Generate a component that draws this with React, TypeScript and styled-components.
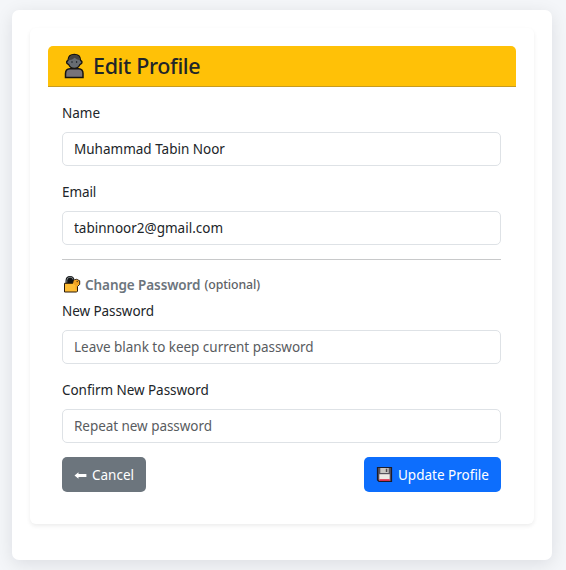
import React from "react";
import styled, { createGlobalStyle } from "styled-components";

const GlobalStyle = createGlobalStyle`
  *, *::before, *::after { box-sizing: border-box; }
  body {
    margin: 0;
    background: #f4f6f9;
    color: #212529;
    font-family: "Noto Sans", "Open Sans", sans-serif;
    font-size: 13.5px;
    line-height: 22px;
    overflow: hidden;
  }
`;

const Page = styled.main`
  height: 570px;
  padding: 10px 14px 10px 12px;
`;

const Panel = styled.section`
  height: 550px;
  padding: 18px;
  border-radius: 7px;
  background: #fff;
  box-shadow: 0 4px 18px rgba(0, 0, 30, 0.1);
`;

const Card = styled.div`
  height: 496px;
  padding: 18px;
  border-radius: 6px;
  background: #fff;
  box-shadow: 0 2px 4px rgba(0, 0, 0, 0.075);
`;

const Header = styled.header`
  display: flex;
  align-items: center;
  height: 41px;
  padding: 0 15px;
  border-bottom: 1px solid #c79b20;
  border-radius: 5px 5px 0 0;
  background: #ffc107;
`;

const Title = styled.h1`
  margin: 0 0 0 7px;
  font-size: 21.5px;
  line-height: 26px;
  font-weight: 500;
`;

const Form = styled.form`
  padding: 15px 15px 0 14px;
`;

const Field = styled.div<{ $gap: number }>`
  display: flex;
  flex-direction: column;
  gap: 8px;
  margin-bottom: ${(p) => p.$gap}px;
`;

const Spaced = styled.span<{ $track: number }>`
  letter-spacing: ${(p) => p.$track}px;
  white-space: nowrap;
`;

const Label = styled.label<{ $track: number }>`
  height: 22px;
  letter-spacing: ${(p) => p.$track}px;
`;

const Input = styled.input<{ $track: number }>`
  width: 100%;
  height: 34px;
  padding: 0 11px;
  border: 1px solid #dee2e6;
  border-radius: 5px;
  background: #fff;
  color: #212529;
  font: inherit;
  letter-spacing: ${(p) => p.$track}px;
  outline: none;
  &::placeholder { color: #595c5f; opacity: 1; }
`;

const Divider = styled.hr`
  height: 1px;
  margin: 0 0 14px;
  border: 0;
  background: #c8c9ca;
`;

const SectionTitle = styled.h2`
  display: flex;
  align-items: center;
  height: 22px;
  margin: 0 0 4px;
  color: #6c757d;
  font-size: 13.5px;
  font-weight: 600;
  svg { margin: 0 4px 2px 1px; }
`;

const Optional = styled.small`
  margin-left: 4px;
  color: #5e6266;
  font-size: 12.3px;
  font-weight: 500;
`;

const Actions = styled.div`
  display: flex;
  justify-content: space-between;
`;

const Button = styled.button<{ $color: string; $width: number }>`
  display: flex;
  align-items: center;
  gap: 5px;
  width: ${(p) => p.$width}px;
  height: 35px;
  padding: 0 0 0 12px;
  border: 0;
  border-radius: 5px;
  background: ${(p) => p.$color};
  color: #fff;
  font: inherit;
`;

const PersonIcon = () => (
  <svg width="23" height="26" viewBox="0 0 23 26">
    <path d="M2.500 24.500v-4Q2.500 16 7 15.800h8.500q4.500.2 4.500 4.700V24.500Z" fill="#777379" stroke="#171410" strokeWidth="1.500" />
    <path d="M11.300 1.500C7.300 1.500 5.200 3.900 5 7.300Q3 8.300 3.900 10.300L5.800 11.700Q7.500 15.300 11.300 15.300t5.500-3.600l1.900-1.400Q19.600 8.300 17.600 7.300C17.400 3.900 15.300 1.500 11.300 1.500Z" fill="#686d72" stroke="#171410" strokeWidth="1.300" />
    <path d="M5.500 7.300Q5.800 2.100 11.300 2.100t5.800 5.200Q13 6.600 11.700 4.700 9.500 7 5.500 7.300Z" fill="#45423f" />
    <ellipse cx="9" cy="9" rx=".7" ry="1.100" fill="#252a31" />
    <ellipse cx="13.600" cy="9" rx=".7" ry="1.100" fill="#252a31" />
  </svg>
);

const LockIcon = () => (
  <svg width="18" height="18" viewBox="0 0 18 18">
    <path d="M2.500 9V6Q2.500 1 7 1T11.500 6v3Z" fill="#111315" />
    <path d="M3.800 7.800V5.500Q4 2.200 7 2.200T10 4.500" fill="none" stroke="#858c90" strokeWidth=".9" />
    <path d="M1.500 8.300h8.300l.7-3L13.500 4.300l3.200 1.500v3.600l-2.200 2v4.800l-.8.800H1.500Z" fill="#ffbd35" stroke="#2b1b0b" strokeWidth="1" strokeLinejoin="round" />
    <path d="M10.700 9.300v-3l1.200-1.200 2.400-.1 1.700 1.200v2.700l-2.200 1.700v4.200h-1.200v-4.200Z" fill="#f3a423" />
    <circle cx="14.200" cy="6.500" r=".7" fill="#513009" />
  </svg>
);

const ArrowIcon = () => (
  <svg width="13" height="10" viewBox="0 0 13 10">
    <path d="M.5 5.500 4.500 2.200V4H12.400V7H4.500V8.800Z" fill="#fff" />
  </svg>
);

const DiskIcon = () => (
  <svg width="17" height="17" viewBox="0 0 17 17">
    <path d="M1.500 1.500h14v14H3L1.500 14Z" fill="#57525c" stroke="#1c1b29" strokeWidth="1.200" />
    <path d="M4.300 2h8.400v5H4.300Z" fill="#c9c7c3" />
    <path d="M9.800 2.700h1.500v3.300H9.800Z" fill="#514b50" />
    <path d="M3.300 8.200h10.400v6.300H3.300Z" fill="#eeeae6" />
    <path d="M3.300 13.200h10.400v1.700H3.300Z" fill="#dc2847" />
  </svg>
);

export default function App() {
  return (
    <>
      <GlobalStyle />
      <Page>
        <Panel>
          <Card>
            <Header>
              <PersonIcon />
              <Title><Spaced $track={-0.35}>Edit Profile</Spaced></Title>
            </Header>
            <Form onSubmit={(e) => e.preventDefault()}>
              <Field $gap={15}>
                <Label htmlFor="name" $track={0}>Name</Label>
                <Input id="name" $track={0} defaultValue="Muhammad Tabin Noor" />
              </Field>
              <Field $gap={14}>
                <Label htmlFor="email" $track={-0.1}>Email</Label>
                <Input id="email" $track={0} defaultValue="tabinnoor2@gmail.com" />
              </Field>
              <Divider />
              <SectionTitle>
                <LockIcon />
                <Spaced $track={-0.08}>Change Password</Spaced>
                <Optional><Spaced $track={-0.1}>(optional)</Spaced></Optional>
              </SectionTitle>
              <Field $gap={15}>
                <Label htmlFor="password" $track={-0.07}>New Password</Label>
                <Input id="password" type="password" $track={-0.03} placeholder="Leave blank to keep current password" />
              </Field>
              <Field $gap={14}>
                <Label htmlFor="confirm" $track={-0.05}>Confirm New Password</Label>
                <Input id="confirm" type="password" $track={-0.05} placeholder="Repeat new password" />
              </Field>
              <Actions>
                <Button type="button" $color="#6c757d" $width={84}>
                  <ArrowIcon />
                  <Spaced $track={0}>Cancel</Spaced>
                </Button>
                <Button type="submit" $color="#0d6efd" $width={137}>
                  <DiskIcon />
                  <Spaced $track={0}>Update Profile</Spaced>
                </Button>
              </Actions>
            </Form>
          </Card>
        </Panel>
      </Page>
    </>
  );
}
